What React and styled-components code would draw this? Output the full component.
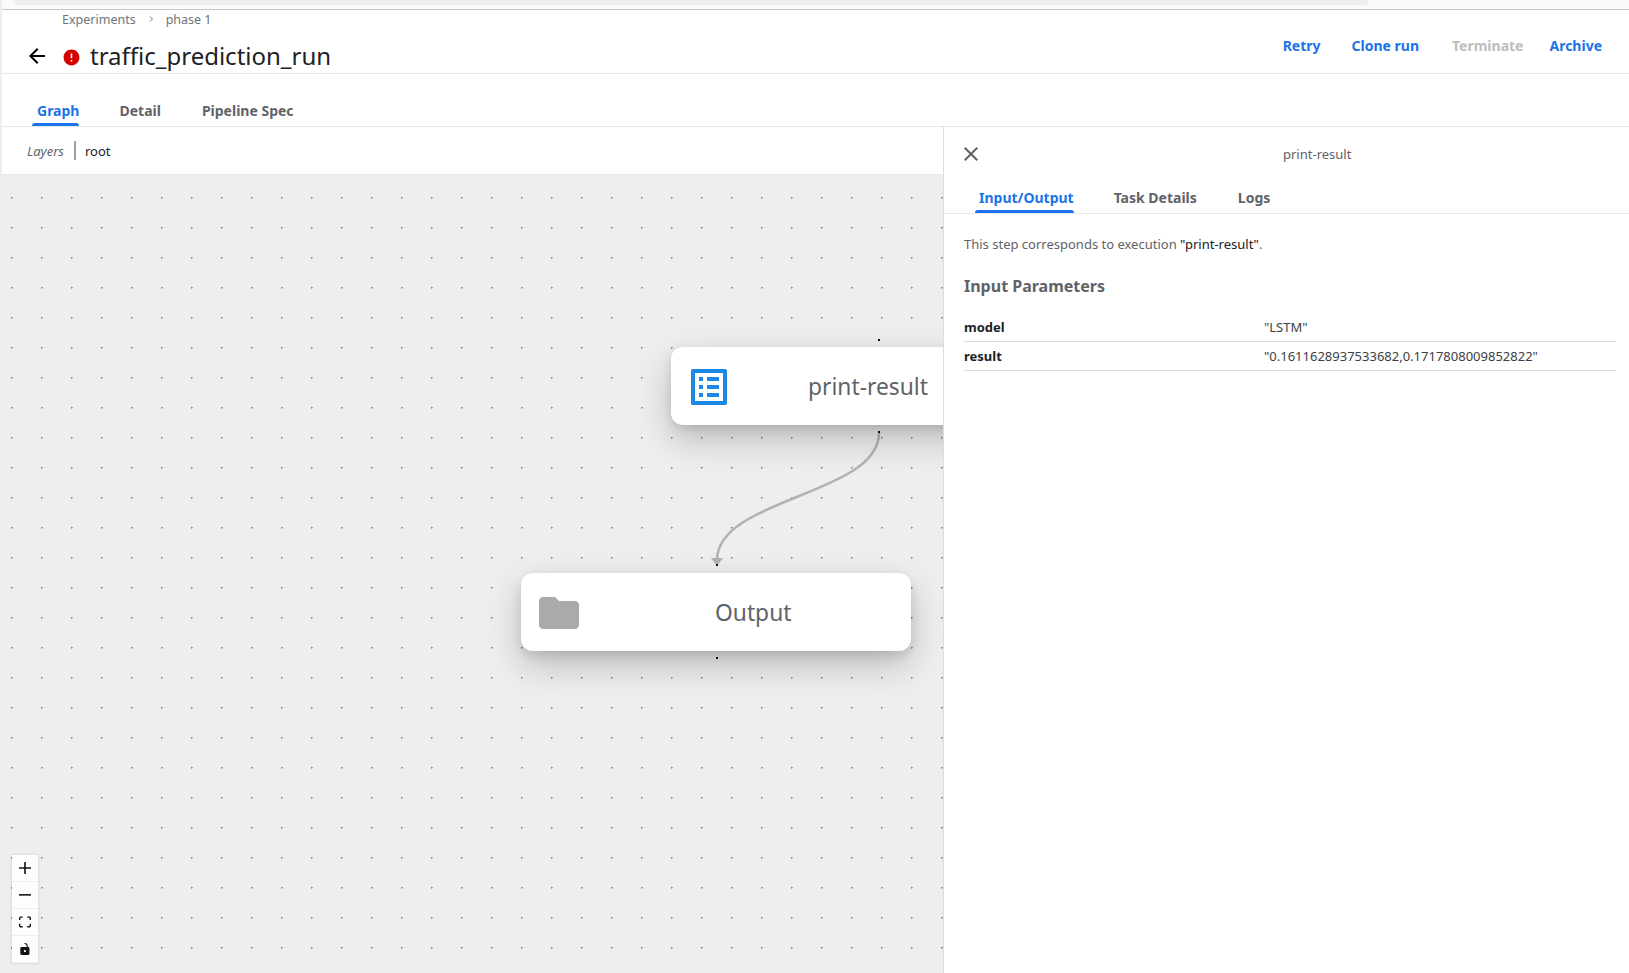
import React from 'react';
import styled, {createGlobalStyle} from 'styled-components';

const GlobalStyle = createGlobalStyle`
    html, body {
        margin: 0;
        padding: 0;
        background: #fff;
        overflow: hidden;
    }
    body {
        font-family: "Noto Sans", "Open Sans", sans-serif;
        color: #5f6368;
    }
`

const Page = styled.div`
    width: 1629px;
    height: 973px;
    display: flex;
    flex-direction: column;
    overflow: hidden;
    border-left: 2px solid #eee;
    box-sizing: border-box;
`
const BrowserStrip = styled.div`
    height: 9px;
    margin-left: -2px;
    flex: none;
    background: #fafafa;
    border-bottom: 1px solid #c8c8c8;
`
const BrowserTab = styled.div`
    width: 1356px;
    height: 5px;
    margin-left: 13px;
    background: #eee;
    border-radius: 0 0 6px 6px;
`
const Header = styled.header`
    height: 64px;
    flex: none;
    box-sizing: border-box;
    border-bottom: 1px solid #e8e8e8;
    display: flex;
    justify-content: space-between;
`
const HeaderLeft = styled.div`
    display: flex;
    flex-direction: column;
`
const Breadcrumb = styled.div`
    display: flex;
    align-items: center;
    height: 19px;
    padding-left: 60px;
    font-size: 12.5px;
    color: #70757a;
`
const Crumb = styled.span`
    white-space: nowrap;
`
const CrumbSep = styled.span`
    width: 30px;
    display: flex;
    justify-content: center;
    svg { display: block; }
`
const TitleRow = styled.div`
    display: flex;
    align-items: center;
    margin-top: 10px;
    padding-left: 23px;
    height: 36px;
`
const BackIcon = styled.svg`
    width: 24px;
    height: 24px;
    fill: #000;
    flex: none;
`
const ErrorIcon = styled.svg`
    width: 19px;
    height: 19px;
    fill: #d50000;
    margin: 4px 9px 0 13px;
    flex: none;
`
const Title = styled.h1`
    margin: 0;
    font-size: 24px;
    font-weight: 400;
    color: #202124;
    white-space: nowrap;
`
const Actions = styled.div`
    display: flex;
    align-items: flex-start;
    padding: 26px 27px 0 0;
`
const ActionLink = styled.span`
    font-size: 14px;
    font-weight: 700;
    line-height: 20px;
    margin-left: ${p => p.$gap}px;
    color: ${p => p.$disabled ? '#bdbdbd' : '#1a73e8'};
    white-space: nowrap;
`
const TabBar = styled.nav`
    display: flex;
    flex: none;
    box-sizing: border-box;
    border-bottom: 1px solid #e8e8e8;
    height: ${p => p.$height}px;
    padding-left: ${p => p.$left}px;
    align-items: flex-end;
`
const Tab = styled.div`
    position: relative;
    font-size: 14px;
    font-weight: 700;
    line-height: 22px;
    white-space: nowrap;
    box-sizing: border-box;
    height: 26px;
    margin-right: ${p => p.$gap}px;
    padding: 0 0 0 ${p => p.$pad}px;
    color: ${p => p.$active ? '#1a73e8' : '#5f6368'};
    &::after {
        content: "";
        display: ${p => p.$active ? 'block' : 'none'};
        position: absolute;
        left: 0;
        right: 0;
        bottom: 0;
        height: 3px;
        background: #1a73e8;
        border-radius: 3px 3px 0 0;
    }
`
const Body = styled.div`
    flex: 1;
    display: flex;
    min-height: 0;
`
const GraphColumn = styled.section`
    width: 941px;
    flex: none;
    display: flex;
    flex-direction: column;
    min-height: 0;
`
const LayersBar = styled.div`
    height: 48px;
    flex: none;
    box-sizing: border-box;
    border-bottom: 1px solid #e8e8e8;
    display: flex;
    align-items: center;
    padding-left: 25px;
`
const LayersLabel = styled.span`
    font-size: 13px;
    font-style: italic;
    color: #5f6368;
`
const LayersDivider = styled.span`
    width: 2px;
    height: 19px;
    background: #9aa0a6;
    margin: 0 9px 0 10px;
`
const LayerName = styled.span`
    font-size: 13px;
    color: #202124;
`
const Canvas = styled.div`
    position: relative;
    flex: 1;
    overflow: hidden;
    background-color: #eee;
    background-image: radial-gradient(circle at 15.7px 15.7px, #808080 0, #808080 0.6px, transparent 1.2px);
    background-size: 30px 30px;
    background-position: -6px 7px;
`
const Node = styled.div`
    position: absolute;
    left: ${p => p.$x}px;
    top: ${p => p.$y}px;
    width: 390px;
    height: 78px;
    background: #fff;
    border-radius: 12px;
    box-shadow: 0 14px 34px rgba(0, 0, 0, 0.22), 0 4px 10px rgba(0, 0, 0, 0.1);
    display: flex;
    align-items: center;
`
const NodeIcon = styled.svg`
    position: absolute;
    left: ${p => p.$left}px;
    top: ${p => p.$top}px;
    width: 48px;
    height: 48px;
    fill: ${p => p.$color};
`
const NodeLabel = styled.span`
    margin-left: ${p => p.$left}px;
    font-size: 22.8px;
    color: #5f6368;
    white-space: nowrap;
`
const Handle = styled.span`
    position: absolute;
    left: ${p => p.$x}px;
    top: ${p => p.$y}px;
    width: 2px;
    height: 2px;
    background: #111;
`
const EdgeLayer = styled.svg`
    position: absolute;
    left: 0;
    top: 0;
    width: 941px;
    height: 798px;
`
const Controls = styled.div`
    position: absolute;
    left: 10px;
    bottom: 10px;
    width: 26px;
    box-shadow: 0 0 2px 1px rgba(0, 0, 0, 0.08);
`
const ControlButton = styled.div`
    height: 27px;
    box-sizing: border-box;
    background: #fefefe;
    border-bottom: 1px solid #eee;
    display: flex;
    align-items: center;
    justify-content: center;
    svg {
        width: 12px;
        height: 12px;
        fill: #111;
        display: block;
    }
`
const Panel = styled.aside`
    flex: 1;
    min-width: 0;
    border-left: 1px solid #dcdcdc;
    display: flex;
    flex-direction: column;
`
const PanelHead = styled.div`
    height: 53px;
    flex: none;
    display: flex;
    align-items: center;
    padding-left: 15px;
`
const CloseIcon = styled.svg`
    width: 24px;
    height: 24px;
    fill: #5f6368;
    flex: none;
`
const PanelTitle = styled.span`
    margin-left: 300px;
    font-size: 13px;
    color: #5f6368;
`
const PanelBody = styled.div`
    padding: 0 13px 0 20px;
`
const StepNote = styled.p`
    margin: 21px 0 0;
    font-size: 13px;
    line-height: 18px;
    color: #5f6368;
`
const ExecName = styled.span`
    color: #202124;
`
const SectionTitle = styled.h2`
    margin: 21px 0 0;
    font-size: 16px;
    font-weight: 700;
    line-height: 24px;
    color: #5f6368;
`
const ParamTable = styled.div`
    margin-top: 15px;
`
const ParamRow = styled.div`
    display: grid;
    grid-template-columns: 300px 1fr;
    height: 29px;
    box-sizing: border-box;
    border-bottom: 1px solid #dcdcdc;
    align-items: center;
    font-size: 13px;
`
const ParamKey = styled.span`
    font-weight: 700;
    color: #202124;
`
const ParamValue = styled.span`
    color: #3c4043;
`

const App = () => {
    return(<>
        <GlobalStyle />
        <Page>
            <BrowserStrip><BrowserTab /></BrowserStrip>
            <Header>
                <HeaderLeft>
                    <Breadcrumb>
                        <Crumb>Experiments</Crumb>
                        <CrumbSep>
                            <svg width="8" height="8" viewBox="0 0 8 8" fill="none" stroke="#70757a" strokeWidth="1">
                                <path d="M3 1.5 5.5 4 3 6.5" />
                            </svg>
                        </CrumbSep>
                        <Crumb>phase 1</Crumb>
                    </Breadcrumb>
                    <TitleRow>
                        <BackIcon viewBox="0 0 24 24">
                            <path d="M20 11H7.83l5.59-5.59L12 4l-8 8 8 8 1.41-1.41L7.83 13H20v-2z" />
                        </BackIcon>
                        <ErrorIcon viewBox="0 0 24 24">
                            <path d="M12 2C6.48 2 2 6.48 2 12s4.48 10 10 10 10-4.48 10-10S17.52 2 12 2zm1 15h-2v-2h2v2zm0-4h-2V7h2v6z" />
                        </ErrorIcon>
                        <Title>traffic_prediction_run</Title>
                    </TitleRow>
                </HeaderLeft>
                <Actions>
                    <ActionLink $gap={0}>Retry</ActionLink>
                    <ActionLink $gap={31}>Clone run</ActionLink>
                    <ActionLink $disabled $gap={33}>Terminate</ActionLink>
                    <ActionLink $gap={26}>Archive</ActionLink>
                </Actions>
            </Header>
            <TabBar $height={53} $left={30}>
                <Tab $active $pad={5} $gap={40}>Graph</Tab>
                <Tab $pad={0} $gap={41}>Detail</Tab>
                <Tab $pad={0} $gap={0}>Pipeline Spec</Tab>
            </TabBar>
            <Body>
                <GraphColumn>
                    <LayersBar>
                        <LayersLabel>Layers</LayersLabel>
                        <LayersDivider />
                        <LayerName>root</LayerName>
                    </LayersBar>
                    <Canvas>
                        <EdgeLayer viewBox="2 175 941 798">
                            <path d="M879 433C879 495 717 498 717 560" fill="none" stroke="#b1b1b7" strokeWidth="2.5" />
                            <path d="M711 558h12l-6 8z" fill="#b1b1b7" />
                        </EdgeLayer>
                        <Handle $x={876} $y={164} />
                        <Handle $x={876} $y={256} />
                        <Handle $x={714} $y={389} />
                        <Handle $x={714} $y={482} />
                        <Node $x={669} $y={172}>
                            <NodeIcon $left={14} $top={16} $color="#1e88e5" viewBox="0 0 24 24">
                                <path d="M19 5v14H5V5h14m1.1-2H3.9c-.5 0-.9.4-.9.9v16.2c0 .4.4.9.9.9h16.2c.4 0 .9-.5.9-.9V3.9c0-.5-.5-.9-.9-.9zM11 7h6v2h-6V7zm0 4h6v2h-6v-2zm0 4h6v2h-6zM7 7h2v2H7zm0 4h2v2H7zm0 4h2v2H7z" />
                            </NodeIcon>
                            <NodeLabel $left={137}>print-result</NodeLabel>
                        </Node>
                        <Node $x={519} $y={398}>
                            <NodeIcon $left={14} $top={16} $color="#aaa" viewBox="0 0 24 24">
                                <path d="M10 4H4c-1.1 0-1.99.9-1.99 2L2 18c0 1.1.9 2 2 2h16c1.1 0 2-.9 2-2V8c0-1.1-.9-2-2-2h-8l-2-2z" />
                            </NodeIcon>
                            <NodeLabel $left={194}>Output</NodeLabel>
                        </Node>
                        <Controls>
                            <ControlButton>
                                <svg viewBox="0 0 32 32"><path d="M32 18.133H18.133V32h-4.266V18.133H0v-4.266h13.867V0h4.266v13.867H32z" /></svg>
                            </ControlButton>
                            <ControlButton>
                                <svg viewBox="0 0 32 5"><path d="M0 0h32v4.2H0z" /></svg>
                            </ControlButton>
                            <ControlButton>
                                <svg viewBox="0 0 32 30"><path d="M3.692 4.63c0-.53.4-.938.939-.938h5.215V0H4.708C2.13 0 0 2.054 0 4.63v5.216h3.692V4.631zM27.354 0h-5.2v3.692h5.17c.53 0 .984.4.984.939v5.215H32V4.631A4.624 4.624 0 0027.354 0zm.954 24.83c0 .532-.4.94-.939.94h-5.215v3.768h5.215c2.577 0 4.631-2.13 4.631-4.707v-5.139h-3.692v5.139zm-23.677.94c-.531 0-.939-.4-.939-.94v-5.138H0v5.139c0 2.577 2.13 4.707 4.708 4.707h5.138V25.77H4.631z" /></svg>
                            </ControlButton>
                            <ControlButton>
                                <svg viewBox="0 0 25 32"><path d="M21.333 10.667H19.81V7.619C19.81 3.429 16.38 0 12.19 0c-4.114 1.828-1.37 2.133.305 2.438 1.676.305 4.42 2.59 4.42 5.181v3.048H3.047A3.056 3.056 0 000 13.714v15.238A3.056 3.056 0 003.048 32h18.285a3.056 3.056 0 003.048-3.048V13.714a3.056 3.056 0 00-3.048-3.047zM12.19 24.533a3.056 3.056 0 01-3.047-3.047 3.056 3.056 0 013.047-3.048 3.056 3.056 0 013.048 3.048 3.056 3.056 0 01-3.048 3.047z" /></svg>
                            </ControlButton>
                        </Controls>
                    </Canvas>
                </GraphColumn>
                <Panel>
                    <PanelHead>
                        <CloseIcon viewBox="0 0 24 24">
                            <path d="M19 6.41 17.59 5 12 10.59 6.41 5 5 6.41 10.59 12 5 17.59 6.41 19 12 13.41 17.59 19 19 17.59 13.41 12z" />
                        </CloseIcon>
                        <PanelTitle>print-result</PanelTitle>
                    </PanelHead>
                    <TabBar $height={34} $left={31}>
                        <Tab $active $pad={4} $gap={40}>Input/Output</Tab>
                        <Tab $pad={0} $gap={41}>Task Details</Tab>
                        <Tab $pad={0} $gap={0}>Logs</Tab>
                    </TabBar>
                    <PanelBody>
                        <StepNote>This step corresponds to execution <ExecName>"print-result"</ExecName>.</StepNote>
                        <SectionTitle>Input Parameters</SectionTitle>
                        <ParamTable>
                            <ParamRow>
                                <ParamKey>model</ParamKey>
                                <ParamValue>"LSTM"</ParamValue>
                            </ParamRow>
                            <ParamRow>
                                <ParamKey>result</ParamKey>
                                <ParamValue>"0.1611628937533682,0.1717808009852822"</ParamValue>
                            </ParamRow>
                        </ParamTable>
                    </PanelBody>
                </Panel>
            </Body>
        </Page>
    </>)
}

export default App;
